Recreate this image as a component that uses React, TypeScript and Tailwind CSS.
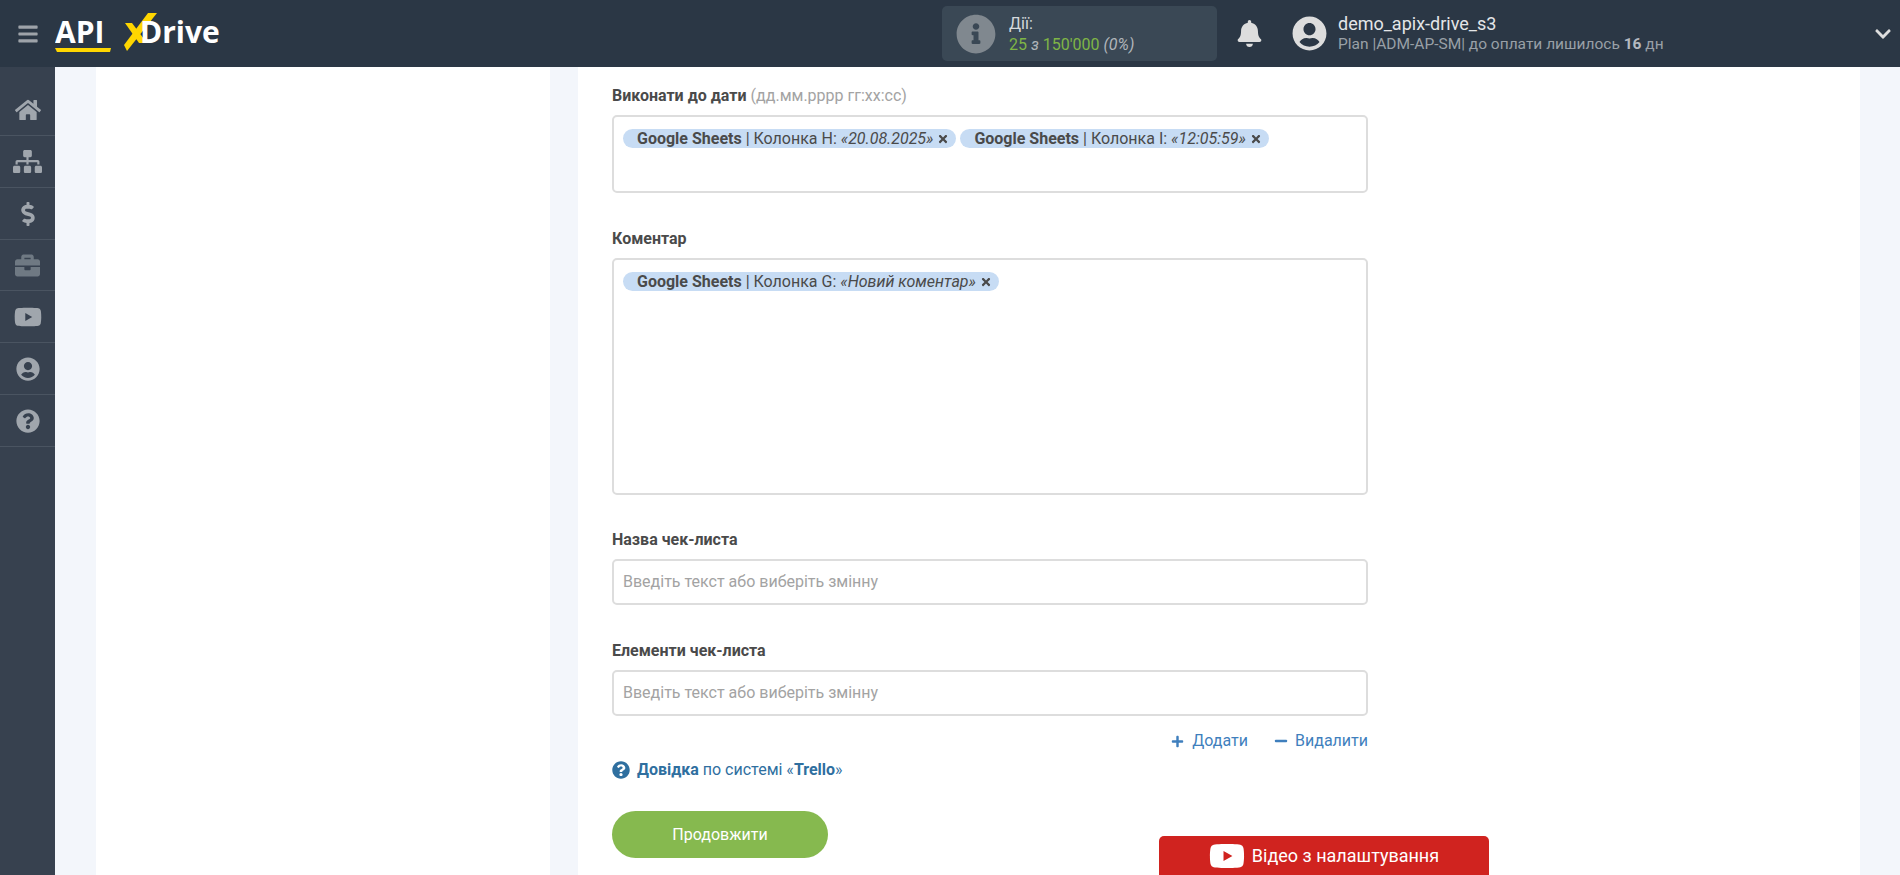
import { FaBars, FaBell, FaBriefcase, FaChevronDown, FaDollarSign, FaHome, FaInfoCircle, FaMinus, FaPlus, FaQuestionCircle, FaSitemap, FaTimes, FaUserCircle, FaYoutube } from 'react-icons/fa';

const sideItems = [
    { icon: FaHome, size: 'text-[26px]', color: 'text-[#a0a6ad]', h: 'h-[52px]' },
    { icon: FaSitemap, size: 'text-[29px]', color: 'text-[#a0a6ad]', h: 'h-[52px]' },
    { icon: FaDollarSign, size: 'text-[24px]', color: 'text-[#a0a6ad]', h: 'h-[52px]' },
    { icon: FaBriefcase, size: 'text-[25px]', color: 'text-[#6f7983]', h: 'h-[51px]' },
    { icon: FaYoutube, size: 'text-[28px]', color: 'text-[#a0a6ad]', h: 'h-[52px]' },
    { icon: FaUserCircle, size: 'text-[24px]', color: 'text-[#a0a6ad]', h: 'h-[52px]' },
    { icon: FaQuestionCircle, size: 'text-[24px]', color: 'text-[#a0a6ad]', h: 'h-[52px]' },
];

function Logo() {
    return (
        <svg width="170" height="44" viewBox="0 0 170 44" className="shrink-0">
            <path d="M93 1 L102 1 L72 39 L69 33 Z" fill="#ffd600" />
            <path d="M70 11 L77 11 L92 31 L84 31 Z" fill="#ffd600" />
            <path d="M0 36 L56 36 L55 40 L2 40 Z" fill="#ffd600" />
            <text x="0" y="31" fill="#fff" fontSize="30" fontWeight="700" fontFamily="'Open Sans', sans-serif">API</text>
            <text x="85" y="31" fill="#fff" fontSize="30" fontWeight="700" fontFamily="'Open Sans', sans-serif">Drive</text>
        </svg>
    );
}

function Tag({ col, value }: { col: string; value: string }) {
    return (
        <span className="bg-[#c7dcf4] rounded-[13px] pl-[14px] pr-[7px] leading-[26px] [box-decoration-break:clone]">
            <b className="font-bold">Google Sheets</b> | {col}: <i>{value}</i> <FaTimes className="inline text-[12px] align-[-1px]" />
        </span>
    );
}

function Field({ label, placeholder }: { label: string; placeholder: string }) {
    return (
        <div>
            <div className="font-bold text-[16px] leading-[20px] text-[#4a4a4a] mb-[9px]">{label}</div>
            <div className="h-[46px] border-2 border-[#dddddd] rounded-[5px] flex items-center px-[9px] text-[16px] text-[#a3a3a3]">
                {placeholder}
            </div>
        </div>
    );
}

export default function App() {
    return (
        <div className="h-[875px] overflow-hidden flex flex-col bg-[#f3f6fb] font-['Roboto',sans-serif]">
            <header className="h-[67px] shrink-0 bg-[#2b3745] flex items-center text-white">
                <div className="w-[55px] flex justify-center pl-[0px]">
                    <FaBars className="text-[#9ea3a9] text-[22px]" />
                </div>
                <Logo />
                <div className="ml-[717px] w-[275px] h-[55px] rounded-[5px] bg-[#3a4855] flex items-center pl-[14px]">
                    <FaInfoCircle className="text-[#80888f] text-[40px]" />
                    <div className="ml-[13px] text-[16px] leading-[21px]">
                        <div className="text-[#d6d9dc]">Дії:</div>
                        <div className="text-[#7fb546]">25 <i className="text-[#b0b5ba]">з</i> 150'000 <i className="text-[#b0b5ba]">(0%)</i></div>
                    </div>
                </div>
                <FaBell className="ml-[19px] text-[#dddddd] text-[27px]" />
                <FaUserCircle className="ml-[29px] text-[#dddddd] text-[35px]" />
                <div className="ml-[11px] leading-[20px]">
                    <div className="text-[18px] text-[#e4e6e8]">demo_apix-drive_s3</div>
                    <div className="text-[15.5px] text-[#99a0a7]">Plan |ADM-AP-SM| до оплати лишилось <b className="text-[#b5bac0]">16</b> дн</div>
                </div>
                <FaChevronDown className="ml-auto mr-[8px] text-[#dddddd] text-[18px]" />
            </header>
            <div className="flex-1 flex min-h-0">
                <nav className="w-[55px] shrink-0 bg-[#37414f] pt-[17px]">
                    {sideItems.map((item, i) => {
                        const Icon = item.icon;
                        return (
                            <div key={i} className={`${item.h} border-b border-[#4a5461] flex items-center justify-center`}>
                                <Icon className={`${item.size} ${item.color}`} />
                            </div>
                        );
                    })}
                </nav>
                <div className="w-[41px] shrink-0" />
                <div className="w-[454px] shrink-0 bg-white" />
                <div className="w-[28px] shrink-0" />
                <main className="w-[1282px] shrink-0 bg-white pl-[34px] pt-[19px] relative">
                    <div className="w-[756px]">
                        <div className="text-[16px] leading-[20px] text-[#4a4a4a] mb-[9px]">
                            <b>Виконати до дати</b> <span className="text-[#a3a3a3]">(дд.мм.рррр гг:хх:сс)</span>
                        </div>
                        <div className="h-[78px] border-2 border-[#dddddd] rounded-[5px] px-[9px] pt-[7px] text-[16px] leading-[30px] text-[#4a4a4a]">
                            <Tag col="Колонка H" value="«20.08.2025»" /> <Tag col="Колонка I" value="«12:05:59»" />
                        </div>
                        <div className="font-bold text-[16px] leading-[20px] text-[#4a4a4a] mt-[36px] mb-[9px]">Коментар</div>
                        <div className="h-[237px] border-2 border-[#dddddd] rounded-[5px] px-[9px] pt-[7px] text-[16px] leading-[30px] text-[#4a4a4a]">
                            <Tag col="Колонка G" value="«Новий коментар»" />
                        </div>
                        <div className="mt-[35px]">
                            <Field label="Назва чек-листа" placeholder="Введіть текст або виберіть змінну" />
                        </div>
                        <div className="mt-[36px]">
                            <Field label="Елементи чек-листа" placeholder="Введіть текст або виберіть змінну" />
                        </div>
                        <div className="flex justify-end gap-[26px] mt-[15px] text-[16px] leading-[20px] text-[#3f7fbd]">
                            <span className="flex items-center gap-[8px]"><FaPlus className="text-[13px]" />Додати</span>
                            <span className="flex items-center gap-[7px]"><FaMinus className="text-[14px]" />Видалити</span>
                        </div>
                        <div className="flex items-center mt-[9px] text-[16px] leading-[20px] text-[#2f6f9f]">
                            <FaQuestionCircle className="text-[18px] mr-[7px]" />
                            <span><b>Довідка</b> по системі «<b>Trello</b>»</span>
                        </div>
                        <div className="mt-[31px] w-[216px] h-[47px] rounded-full bg-[#86b94f] text-white text-[16px] flex items-center justify-center">
                            Продовжити
                        </div>
                    </div>
                    <div className="absolute left-[581px] top-[769px] w-[330px] h-[39px] bg-[#d0231f] rounded-t-[5px] flex items-center justify-center text-white text-[18px] gap-[7px]">
                        <FaYoutube className="text-[36px]" />
                        Відео з налаштування
                    </div>
                </main>
            </div>
        </div>
    );
}
